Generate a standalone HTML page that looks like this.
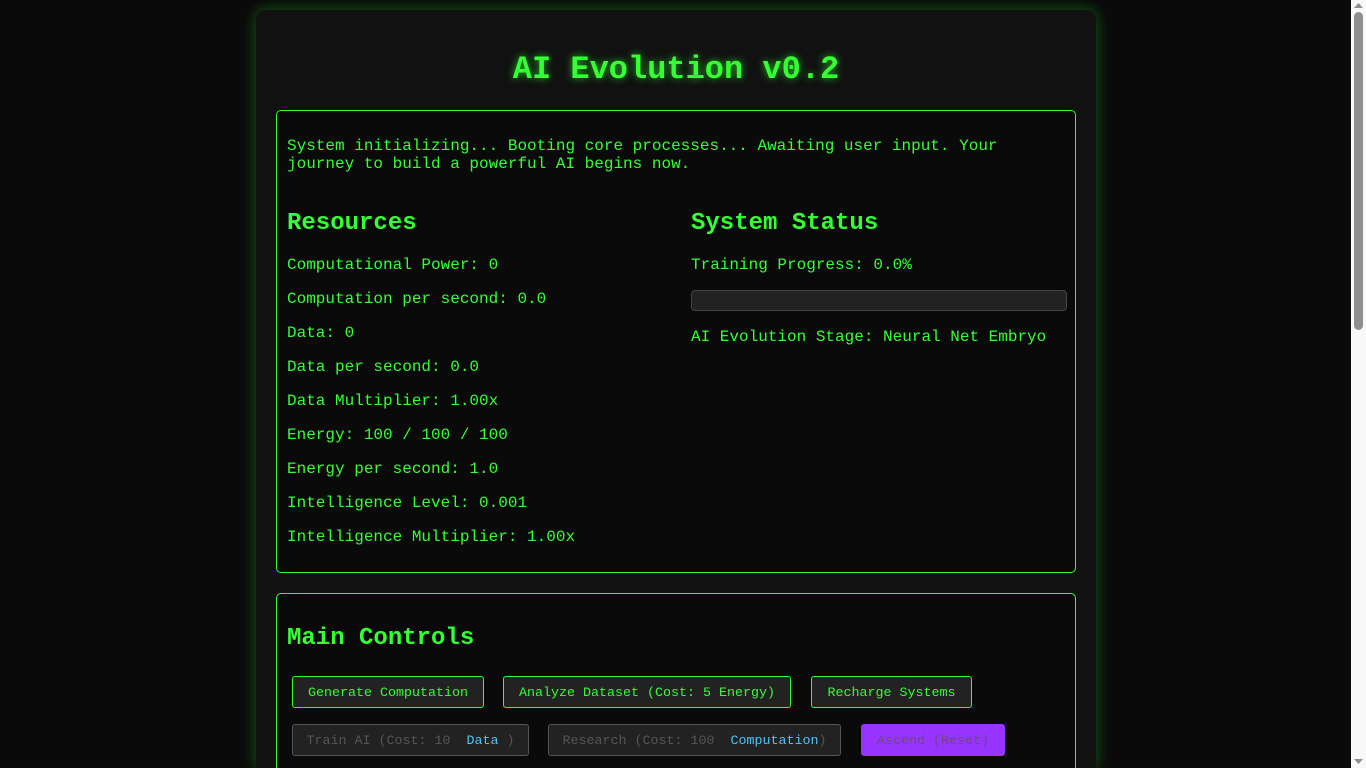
<!DOCTYPE html>
<html><head><meta charset="utf-8"><style>
html,body{margin:0;padding:0;overflow:hidden;width:1366px;height:768px;background:#0a0a0a;}
body{font-family:"Liberation Mono","Courier New",monospace;color:#33ff33;position:relative;}
#wrap{position:absolute;left:0;top:0;width:1351px;height:768px;overflow:hidden;}
.container{position:absolute;left:256px;top:10px;width:840px;height:758px;background:#111;border-radius:10px 10px 0 0;box-shadow:0 0 15px rgba(51,255,51,0.35);overflow:hidden;}
h1{position:absolute;left:0;width:840px;top:41px;margin:0;text-align:center;font-size:32px;line-height:38px;font-weight:bold;color:#33ff33;text-shadow:0 0 8px rgba(51,255,51,0.7);}
.panel{position:absolute;left:20px;width:798px;background:#0a0a0a;border:1px solid #33ff33;border-radius:5px;}
p{margin:0;font-size:16px;line-height:18px;position:absolute;white-space:nowrap;}
h2{margin:0;position:absolute;font-size:24px;line-height:28px;font-weight:bold;}
.bar{position:absolute;left:414px;top:179px;width:374px;height:19px;background:#222;border:1px solid #444;border-radius:4px;}
.btn{position:absolute;box-sizing:border-box;height:32px;border:1px solid #33ff33;background:#222;border-radius:3px;font-size:13.33px;line-height:34px;text-align:center;color:#33ff33;white-space:nowrap;}
.dis{border-color:#555;color:#555;}
.dis b{font-weight:normal;color:#4fc3f7;}
.asc{background:#9933ff;border-color:#9933ff;color:#6b4a7a;}
.sb{position:absolute;left:1351px;top:0;width:15px;height:768px;background:#f8f8f8;}
.thumb{position:absolute;left:3px;top:12px;width:9px;height:318px;background:#8f8f8f;border-radius:5px;}
</style></head><body>
<div id="wrap">
<div class="container">
<h1>AI Evolution v0.2</h1>
<div class="panel" style="top:100px;height:461px;">
<p style="left:10px;top:26px;">System initializing... Booting core processes... Awaiting user input. Your</p>
<p style="left:10px;top:44px;">journey to build a powerful AI begins now.</p>
<h2 style="left:10px;top:99px;">Resources</h2>
<p style="left:10px;top:145px;">Computational Power: 0</p>
<p style="left:10px;top:179px;">Computation per second: 0.0</p>
<p style="left:10px;top:213px;">Data: 0</p>
<p style="left:10px;top:247px;">Data per second: 0.0</p>
<p style="left:10px;top:281px;">Data Multiplier: 1.00x</p>
<p style="left:10px;top:315px;">Energy: 100 / 100 / 100</p>
<p style="left:10px;top:349px;">Energy per second: 1.0</p>
<p style="left:10px;top:383px;">Intelligence Level: 0.001</p>
<p style="left:10px;top:417px;">Intelligence Multiplier: 1.00x</p>
<h2 style="left:414px;top:99px;">System Status</h2>
<p style="left:414px;top:145px;">Training Progress: 0.0%</p>
<div class="bar"></div>
<p style="left:414px;top:217px;">AI Evolution Stage: Neural Net Embryo</p>
</div>
<div class="panel" style="top:583px;height:180px;">
<h2 style="left:10px;top:31px;">Main Controls</h2>
<div class="btn" style="left:15px;top:82px;width:192px;">Generate Computation</div>
<div class="btn" style="left:226px;top:82px;width:288px;">Analyze Dataset (Cost: 5 Energy)</div>
<div class="btn" style="left:534px;top:82px;width:161px;">Recharge Systems</div>
<div class="btn dis" style="left:15px;top:130px;width:237px;">Train AI (Cost: 10 <b>&nbsp;Data</b> )</div>
<div class="btn dis" style="left:271px;top:130px;width:293px;">Research (Cost: 100 <b>&nbsp;Computation</b>)</div>
<div class="btn asc" style="left:584px;top:130px;width:144px;">Ascend (Reset)</div>
</div>
</div>
</div>
<div class="sb"><div class="thumb"></div>
<svg style="position:absolute;left:3px;top:3px" width="9" height="6"><path d="M0 5 L4.5 0 L9 5Z" fill="#8f8f8f"/></svg>
<svg style="position:absolute;left:3px;top:759px" width="9" height="6"><path d="M0 0 L4.5 5 L9 0Z" fill="#8f8f8f"/></svg>
</div>
</body></html>
